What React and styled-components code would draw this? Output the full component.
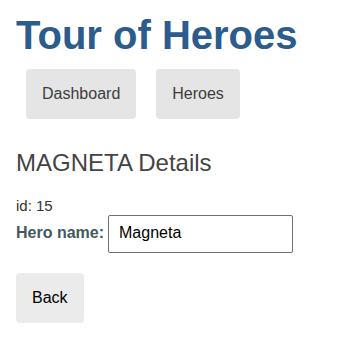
import React from "react";
import styled, { createGlobalStyle } from "styled-components";

const Global = createGlobalStyle`
  html, body { margin: 0; padding: 0; background: #fff; }
  body { font-family: "Liberation Sans", Arial, Helvetica, sans-serif; color: #333; }
`;

const Page = styled.div`
  padding: 12px 16px 0 16px;
  display: flex;
  flex-direction: column;
  align-items: flex-start;
`;

const Title = styled.h1`
  margin: 0;
  font-size: 40px;
  line-height: 46px;
  font-weight: bold;
  color: #2c5b8e;
`;

const Nav = styled.nav`
  display: flex;
  gap: 20px;
  margin-top: 11px;
  padding-left: 10px;
`;

const NavLink = styled.a`
  display: block;
  padding: 16px;
  font-size: 16px;
  line-height: 18px;
  background-color: #e5e5e5;
  color: #3d3d3d;
  border-radius: 4px;
  text-decoration: none;
  cursor: pointer;
`;

const Heading = styled.h2`
  margin: 30px 0 0 0;
  font-size: 24px;
  line-height: 28px;
  font-weight: normal;
  color: #444;
`;

const IdLine = styled.div`
  margin-top: 20px;
  font-size: 15px;
  line-height: 17px;
  color: #333;
`;

const Field = styled.div`
  display: flex;
  align-items: baseline;
  gap: 4px;
  margin-top: 1px;
`;

const Label = styled.label`
  font-size: 16px;
  font-weight: bold;
  color: #435960;
`;

const Input = styled.input`
  box-sizing: border-box;
  width: 185px;
  height: 38px;
  padding: 8px 10px 10px 10px;
  font-family: "Liberation Sans", Arial, Helvetica, sans-serif;
  font-size: 16px;
  color: #000;
  border: 1px solid #707070;
  border-radius: 2px;
  outline: none;
`;

const Button = styled.button`
  margin-top: 20px;
  padding: 16px;
  font-family: "Liberation Sans", Arial, Helvetica, sans-serif;
  font-size: 16px;
  line-height: 18px;
  color: #000;
  background-color: #ebebeb;
  border: none;
  border-radius: 4px;
  cursor: pointer;
`;

export default function App() {
  return (
    <>
      <Global />
      <Page>
        <Title>Tour of Heroes</Title>
        <Nav>
          <NavLink>Dashboard</NavLink>
          <NavLink>Heroes</NavLink>
        </Nav>
        <Heading>MAGNETA Details</Heading>
        <IdLine>id: 15</IdLine>
        <Field>
          <Label htmlFor="hero-name">Hero name:</Label>
          <Input id="hero-name" type="text" defaultValue="Magneta" />
        </Field>
        <Button>Back</Button>
      </Page>
    </>
  );
}
